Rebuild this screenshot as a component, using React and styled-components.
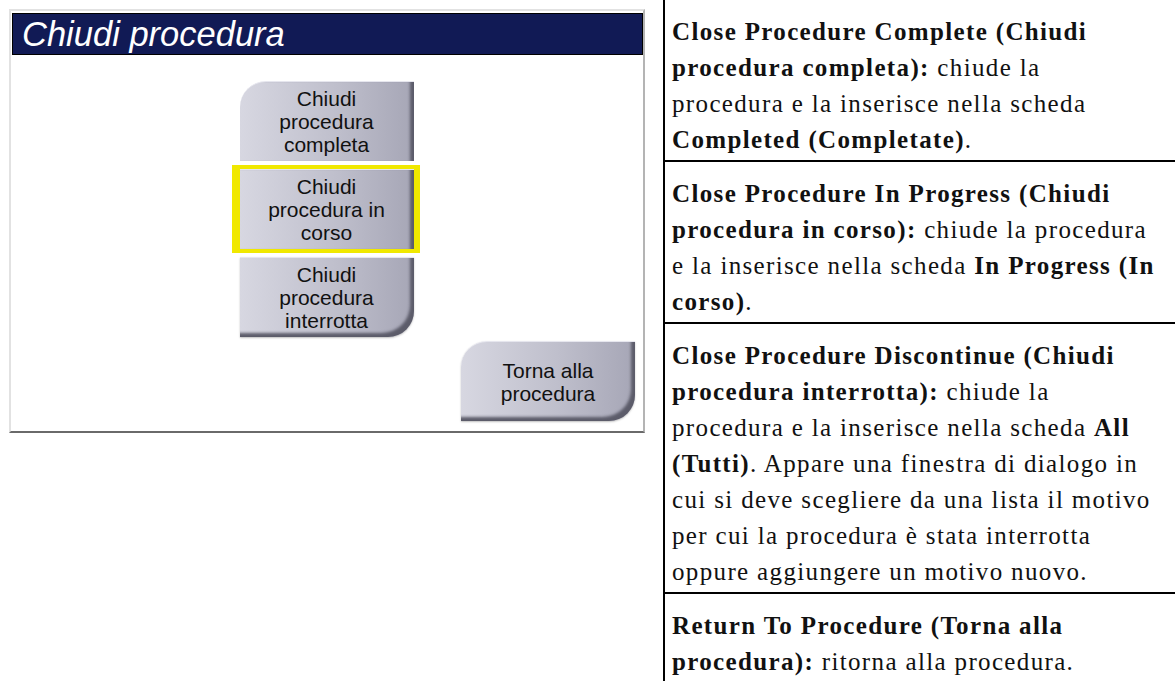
import styled, { createGlobalStyle, css } from "styled-components";

const GlobalStyle = createGlobalStyle`
  html, body {
    margin: 0;
    padding: 0;
    background: #fff;
  }
`;

const Page = styled.div`
  display: flex;
  align-items: flex-start;
  width: 1175px;
  height: 681px;
  overflow: hidden;
`;

const LeftArea = styled.div`
  width: 663px;
  padding: 9px 0 0 9px;
  box-sizing: border-box;
`;

const Panel = styled.div`
  width: 636px;
  height: 424px;
  box-sizing: border-box;
  border: 2px solid;
  border-color: #e2e2e2 #b4b4b4 #6a6a6a #e2e2e2;
  padding: 2px 0 0 1px;
  display: flex;
  flex-direction: column;
  background: #fff;
`;

const TitleBar = styled.div`
  width: 631px;
  height: 42px;
  box-sizing: border-box;
  background: #111a55;
  border: 1px solid #000;
  padding-left: 9px;
  display: flex;
  align-items: center;
  font-family: "Liberation Sans", Arial, sans-serif;
  font-style: italic;
  font-size: 34.5px;
  color: #fff;
`;

const Body = styled.div`
  flex: 1;
  display: flex;
  flex-direction: column;
  padding-top: 26px;
`;

const Stack = styled.div`
  display: flex;
  flex-direction: column;
  align-items: center;
  gap: 8px;
  margin-left: -2px;
`;

const cornerStyles = {
  top: css`
    border-top-left-radius: 26px;
  `,
  middle: css``,
  bottom: css`
    border-bottom-right-radius: 26px;
  `,
  both: css`
    border-top-left-radius: 26px;
    border-bottom-right-radius: 26px;
  `,
};

const YELLOW = "#f0e800";

const Btn = styled.div`
  width: 174px;
  height: 80px;
  box-sizing: border-box;
  display: flex;
  align-items: center;
  justify-content: center;
  text-align: center;
  font-family: "Liberation Sans", Arial, sans-serif;
  font-size: 21px;
  line-height: 23px;
  color: #111;
  background: linear-gradient(90deg, #d7d7e1 0%, #bfbfcc 55%, #a6a6b6 100%);
  box-shadow: ${(p) =>
    p.$shelf
      ? "inset -6px -6px 3px -2px #5c5c6a, 0 1px 2px rgba(0,0,0,0.25)"
      : "inset -6px 0 3px -2px #5c5c6a"};
  border-top: 1px solid #e6e6ee;
  ${(p) => cornerStyles[p.$corner || "middle"]}
  ${(p) =>
    p.$selected &&
    css`
      box-shadow: inset -6px 0 3px -2px #5c5c6a, 0 0 0 4px ${YELLOW},
        -4px 0 0 4px ${YELLOW}, 2px 0 0 4px ${YELLOW};
    `}
`;

const Footer = styled.div`
  display: flex;
  justify-content: flex-end;
  padding: 4px 8px 0 0;
`;

const Notes = styled.div`
  flex: 1;
  border-left: 2px solid #000;
  height: 681px;
  font-family: "Liberation Serif", "Times New Roman", serif;
  font-size: 25px;
  letter-spacing: 1.35px;
  line-height: 36px;
  color: #111;
`;

const Note = styled.div`
  padding: 14px 6px 2px 7px;
  border-bottom: ${(p) => (p.$last ? "none" : "2px solid #000")};
  white-space: nowrap;
`;

const B = styled.b`
  font-weight: bold;
`;

export default function App() {
  return (
    <>
      <GlobalStyle />
      <Page>
        <LeftArea>
          <Panel>
            <TitleBar>Chiudi procedura</TitleBar>
            <Body>
              <Stack>
                <Btn $corner="top">
                  Chiudi
                  <br />
                  procedura
                  <br />
                  completa
                </Btn>
                <Btn $selected>
                  Chiudi
                  <br />
                  procedura in
                  <br />
                  corso
                </Btn>
                <Btn $corner="bottom" $shelf>
                  Chiudi
                  <br />
                  procedura
                  <br />
                  interrotta
                </Btn>
              </Stack>
              <Footer>
                <Btn $corner="both" $shelf>
                  Torna alla
                  <br />
                  procedura
                </Btn>
              </Footer>
            </Body>
          </Panel>
        </LeftArea>
        <Notes>
          <Note>
            <B>Close Procedure Complete (Chiudi</B>
            <br />
            <B>procedura completa):</B> chiude la
            <br />
            procedura e la inserisce nella scheda
            <br />
            <B>Completed (Completate)</B>.
          </Note>
          <Note>
            <B>Close Procedure In Progress (Chiudi</B>
            <br />
            <B>procedura in corso):</B> chiude la procedura
            <br />e la inserisce nella scheda <B>In Progress (In</B>
            <br />
            <B>corso)</B>.
          </Note>
          <Note>
            <B>Close Procedure Discontinue (Chiudi</B>
            <br />
            <B>procedura interrotta):</B> chiude la
            <br />
            procedura e la inserisce nella scheda <B>All</B>
            <br />
            <B>(Tutti)</B>. Appare una finestra di dialogo in
            <br />
            cui si deve scegliere da una lista il motivo
            <br />
            per cui la procedura è stata interrotta
            <br />
            oppure aggiungere un motivo nuovo.
          </Note>
          <Note $last>
            <B>Return To Procedure (Torna alla</B>
            <br />
            <B>procedura):</B> ritorna alla procedura.
          </Note>
        </Notes>
      </Page>
    </>
  );
}
